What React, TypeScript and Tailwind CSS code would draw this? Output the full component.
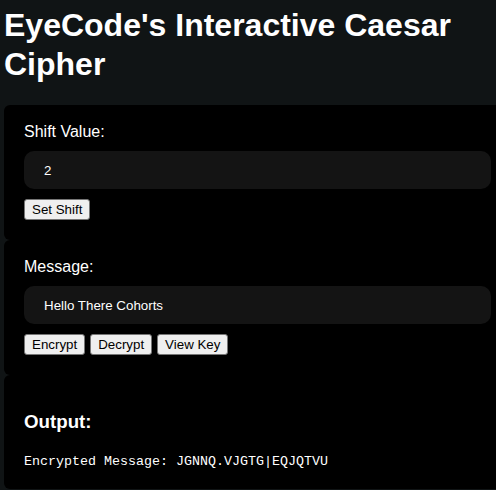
const sans = "font-['Liberation_Sans',Arial,sans-serif]"
const btnClass =
  'rounded-[3px] border border-[#767676] bg-[#efefef] px-[7px] py-[2px] text-[13.33px] leading-[15px] text-black'
const inputClass =
  'mt-3 block h-[38px] w-full rounded-[10px] bg-[#141414] px-5 text-[13.33px] text-white outline-none'

export default function App() {
  return (
    <div className={`h-[490px] w-[496px] overflow-hidden bg-[#101415] pl-1 text-white ${sans}`}>
      <h1 className="mb-[21px] pt-[6px] text-[32px] leading-[39px] font-bold">
        EyeCode's Interactive Caesar Cipher
      </h1>

      <Card>
        <label className="block text-base leading-[14px]">Shift Value:</label>
        <input className={inputClass} defaultValue="2" />
        <div className="mt-[10px] flex">
          <button type="button" className={btnClass}>
            Set Shift
          </button>
        </div>
      </Card>

      <Card>
        <label className="block text-base leading-[14px]">Message:</label>
        <input className={inputClass} defaultValue="Hello There Cohorts" />
        <div className="mt-[10px] flex gap-[5px]">
          <button type="button" className={btnClass}>
            Encrypt
          </button>
          <button type="button" className={btnClass}>
            Decrypt
          </button>
          <button type="button" className={btnClass}>
            View Key
          </button>
        </div>
      </Card>

      <Card>
        {/* output block */}
        <h3 className="mt-4 mb-[21px] text-[18.72px] leading-[21.5px] font-bold">Output:</h3>
        <p className="font-['Liberation_Mono','Courier_New',monospace] text-[13.33px] leading-[15px]">
          Encrypted Message: JGNNQ.VJGTG|EQJQTVU
        </p>
      </Card>
    </div>
  )
}

function Card({ children }: { children: React.ReactNode }) {
  return <div className="w-[507px] rounded-md bg-black p-5">{children}</div>
}
